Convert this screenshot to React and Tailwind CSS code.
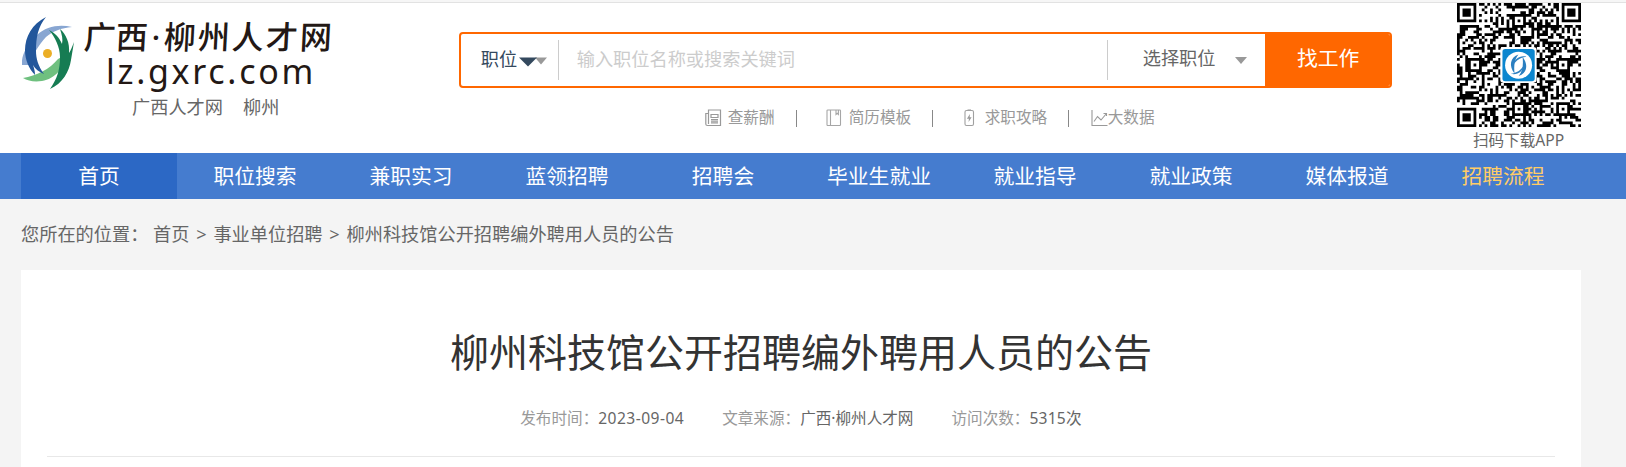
import React from "react";

const navLinks = [
  "首页",
  "职位搜索",
  "兼职实习",
  "蓝领招聘",
  "招聘会",
  "毕业生就业",
  "就业指导",
  "就业政策",
  "媒体报道",
  "招聘流程",
];

const QR_SIZE = 45;

function buildQr() {
  const cells = [];
  let seed = 20230904;
  const rand = () => {
    seed = (seed * 1103515245 + 12345) % 2147483648;
    return seed / 2147483648;
  };
  const finders = [
    [0, 0],
    [QR_SIZE - 7, 0],
    [0, QR_SIZE - 7],
  ];
  const aligns = [
    [22, 6],
    [6, 22],
    [38, 22],
    [22, 38],
    [38, 38],
  ];
  for (let y = 0; y < QR_SIZE; y++) {
    for (let x = 0; x < QR_SIZE; x++) {
      let on = rand() > 0.47;
      if (x === 6 || y === 6) on = (x + y) % 2 === 0;
      aligns.forEach(([ax, ay]) => {
        const d = Math.max(Math.abs(x - ax), Math.abs(y - ay));
        if (d <= 2) on = d !== 1;
      });
      finders.forEach(([fx, fy]) => {
        const d = Math.max(Math.abs(x - fx - 3), Math.abs(y - fy - 3));
        if (d <= 4) on = d !== 4 && d !== 2;
      });
      if (on) cells.push(`M${x} ${y}h1v1h-1z`);
    }
  }
  return cells.join("");
}

const qrPath = buildQr();

function LogoMark() {
  return (
    <svg className="w-[52px] h-[73px] ml-px shrink-0" viewBox="0 0 52 73">
      <path fill="#88a6d2" d="M50 10C38 7 24 9 15 18C5 28-1 38 0 48L8 48C10 38 17 28 24 20C31 14 39 11 50 10Z" />
      <path fill="#6fc07f" d="M1 61C14 59 28 52 36 42L45 37C43 50 33 62 20 64C12 65 6 64 1 61Z" />
      <path fill="#22569b" d="M24 0C10 7 3 20 3 33C3 43 7 52 13 58C13 54 12 51 11 48C13 52 17 55 22 57C16 49 14 41 14 34C14 20 16 10 24 0Z" />
      <path fill="#167c53" d="M27 13C33 20 38 30 38 40C38 53 35 62 28 72C41 66 47 55 49 43C50 37 51 31 52 25C50 30 49 33 47 36C48 26 44 17 38 12C40 18 41 22 40 27C37 20 33 16 27 13Z" />
      <circle cx="25.500" cy="36.500" r="4.500" fill="#ebae25" />
    </svg>
  );
}

function QrCode() {
  return (
    <svg className="w-[124px] h-[124px] ml-px" viewBox="0 0 45 45">
      <path d={qrPath} fill="#000" />
      <rect x="15.700" y="16" width="13.200" height="13" rx="1.200" fill="#fff" />
      <rect x="16.500" y="16.700" width="11.700" height="11.700" rx="1" fill="#0c86cf" />
      <circle cx="22.350" cy="22.550" r="4.900" fill="#fff" />
      <g fill="#2b7fc0">
        <path d="M22.300 18.700C19.300 19.600 18.700 22.900 20.900 25.600C20.600 22.800 20.800 20.600 22.300 18.700Z" />
        <path d="M22.400 26.500C25.400 25.600 26 22.300 23.800 19.600C24.100 22.400 23.900 24.600 22.400 26.500Z" />
        <path d="M25.200 19.500C22.700 18.900 20.900 20.300 20.300 22.700C21.600 20.700 23 19.800 25.200 19.500Z" />
        <path d="M19.500 25.700C22 26.300 23.800 24.900 24.400 22.500C23.100 24.500 21.700 25.400 19.500 25.700Z" />
      </g>
    </svg>
  );
}

function SalaryIcon() {
  return (
    <svg className="w-[17px] h-[18px]" viewBox="0 0 17 18" fill="none" stroke="#999" strokeWidth="1.200">
      <path d="M3.500 1h12v15.500h-13C1.200 16.500.8 15.800.8 15V4.500h2.700zM3.500 4.500V15" />
      <path d="M6 5.500h7v3H6zM6 10.500h7M6 12.200h7M6 13.900h7" />
    </svg>
  );
}

function TemplateIcon() {
  return (
    <svg className="w-[16px] h-[18px]" viewBox="0 0 16 18" fill="none" stroke="#a6a6a6" strokeWidth="1.100">
      <rect x="1" y="1" width="13.500" height="15.500" rx="0.800" />
      <path d="M4.500 1v15.500M10 1v4.500l1.200-1.200 1.200 1.200V1" />
    </svg>
  );
}

function GuideIcon() {
  return (
    <svg className="w-[11px] h-[18px]" viewBox="0 0 11 18" fill="none" stroke="#a0a0a0" strokeWidth="1.100">
      <rect x="1" y="1.500" width="8.500" height="15" rx="1.500" />
      <path d="M3.500 1h3.500" />
      <path fill="#999" stroke="none" d="M5.900 5L2.900 9.700h2L4.600 13l3-4.700H5.700z" />
    </svg>
  );
}

function ChartIcon() {
  return (
    <svg className="w-[17px] h-[18px]" viewBox="0 0 17 18" fill="none" stroke="#999" strokeWidth="1.100">
      <path d="M1 1v15.500h15.500" />
      <path d="M3 12.500l3.500-5 3.500 3.500 5.500-6.500M12.500 4.500h3v2.500" />
    </svg>
  );
}

function SearchBox() {
  return (
    <form className="flex w-[933px] h-14 rounded overflow-hidden border-2 border-[#ff6700] bg-white">
      <div className="flex items-center w-[98px] h-10 mt-1.5 pl-5 border-r border-[#ccc] text-[18.200px] text-[#34495e]">
        <span className="whitespace-nowrap">职位</span>
        <svg className="w-[29px] h-[10px] mt-1 ml-px shrink-0" viewBox="0 0 29 10">
          <path d="M17 0.500h12l-6 7z" fill="#999" />
          <path d="M1 0.500h18l-9 9z" fill="#34495e" />
        </svg>
      </div>
      <div className="flex items-center w-[549px] h-10 mt-1.5 pl-[18px] border-r border-[#ccc] text-[18.200px] text-[#ccc]">
        输入职位名称或搜索关键词
      </div>
      <div className="flex items-center w-[157px] pl-[35px] pb-0.5 text-[18.200px] text-[#666]">
        选择职位
        <svg className="w-[12px] h-[7px] ml-[20px] mt-0.5" viewBox="0 0 12 7">
          <path d="M0 0h12l-6 7z" fill="#999" />
        </svg>
      </div>
      <button type="button" className="flex-1 bg-[#ff6700] pb-[3px] pl-0.5 text-[20.800px] text-white">
        找工作
      </button>
    </form>
  );
}

function QuickLinks() {
  return (
    <div className="flex items-center h-6 mt-[18px] ml-[246px] text-[15.600px] text-[#999] whitespace-nowrap">
      <div className="flex items-center w-[91px] gap-1.5">
        <SalaryIcon />
        <span className="-mt-px">查薪酬</span>
      </div>
      <i className="w-px h-[17px] bg-[#888]" />
      <div className="flex items-center w-[135px] pl-[29px] gap-[7px]">
        <TemplateIcon />
        <span className="-mt-px">简历模板</span>
      </div>
      <i className="w-px h-[17px] bg-[#888]" />
      <div className="flex items-center w-[135px] pl-[31px] gap-[10px]">
        <GuideIcon />
        <span className="-mt-px">求职攻略</span>
      </div>
      <i className="w-px h-[17px] bg-[#888]" />
      <div className="flex items-center pl-[22px]">
        <ChartIcon />
        <span className="-mt-px">大数据</span>
      </div>
    </div>
  );
}

function Header() {
  return (
    <header className="h-[153px] bg-white">
      <div className="h-[3px] bg-[#f6f6f6] border-b border-[#e2e2e2]" />
      <div className="flex w-[1560px] ml-[21px]">
        <div className="w-[438px] pt-[14px]">
          <div className="flex h-[75px]">
            <LogoMark />
            <div className="ml-[10px] text-[#231815] whitespace-nowrap">
              <div className="flex h-9 items-center pt-1 text-[32px] font-medium -skew-x-3">
                <span>广西</span>
                <span className="w-4 text-center">·</span>
                <span className="tracking-[2px]">柳州人才网</span>
              </div>
              <div className="ml-[22px] -mt-1 text-[34px] leading-[44px] tracking-[2.700px]">lz.gxrc.com</div>
            </div>
          </div>
          <div className="flex gap-5 ml-[111px] mt-px text-[18.200px] leading-7 text-[#666]">
            <span>广西人才网</span>
            <span>柳州</span>
          </div>
        </div>
        <div className="w-[998px] pt-[29px]">
          <SearchBox />
          <QuickLinks />
        </div>
        <div className="w-[125px] shrink-0">
          <QrCode />
          <p className="text-center text-[15.600px] leading-[26px] text-[#666] whitespace-nowrap">扫码下载APP</p>
        </div>
      </div>
    </header>
  );
}

export default function App() {
  return (
    <div className="w-[1626px] h-[467px] overflow-hidden bg-[#f4f4f4] font-['Noto_Sans','Noto_Sans_CJK_SC',sans-serif]">
      <Header />
      <nav className="h-[46px] bg-[#457ccf]">
        <ul className="flex w-[1560px] ml-[21px] text-[20.800px] leading-[46px] text-center text-white">
          {navLinks.map((name, i) => (
            <li
              key={name}
              className={
                i === 0
                  ? "w-[156px] bg-[#2c68c5]"
                  : i === navLinks.length - 1
                    ? "w-[156px] text-[#ffcc66]"
                    : "w-[156px]"
              }
            >
              {name}
            </li>
          ))}
        </ul>
      </nav>
      <main className="w-[1560px] ml-[21px]">
        <div className="flex h-[71px] items-center text-[18.200px] text-[#666] whitespace-pre">
          <span className="w-[132px]">您所在的位置：</span>
          <span>首页</span>
          <span className="w-[24px] text-center">&gt;</span>
          <span>事业单位招聘</span>
          <span className="w-[24px] text-center">&gt;</span>
          <span>柳州科技馆公开招聘编外聘用人员的公告</span>
        </div>
        <article className="h-[197px] px-[26px] bg-white text-center">
          <h1 className="pt-[52px] text-[39px] leading-[60px] text-[#333]">柳州科技馆公开招聘编外聘用人员的公告</h1>
          <div className="flex justify-center gap-[38px] h-[75px] pt-[21px] border-b border-[#e8e8e8] text-[15.600px] leading-[30px] text-[#999]">
            <span>
              发布时间：<b className="font-normal tracking-[0.450px] text-[#666]">2023-09-04</b>
            </span>
            <span>
              文章来源：<b className="font-normal text-[#666]">广西·柳州人才网</b>
            </span>
            <span>
              访问次数：<b className="font-normal tracking-[0.200px] text-[#666]">5315次</b>
            </span>
          </div>
        </article>
      </main>
    </div>
  );
}
